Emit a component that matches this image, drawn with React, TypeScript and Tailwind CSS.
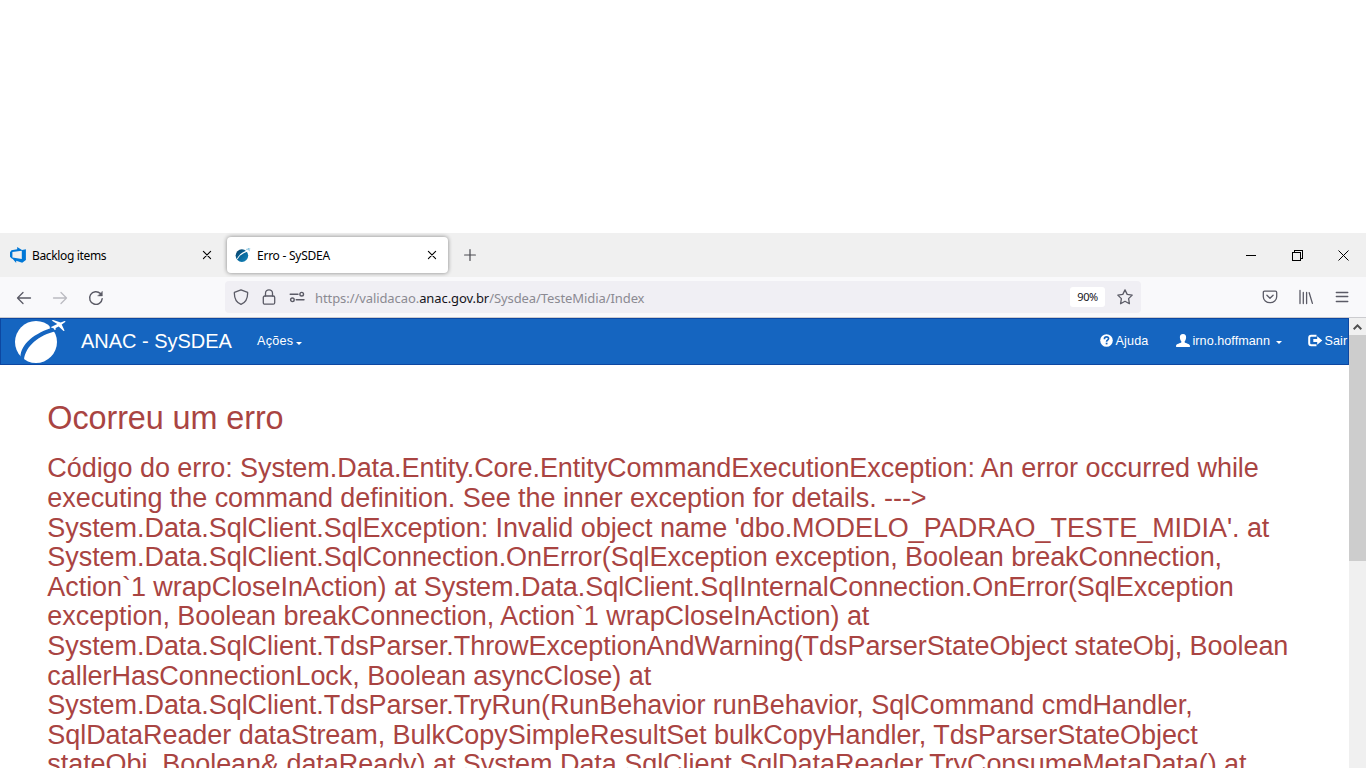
import React from "react";

const errorLines = [
  "Código do erro: System.Data.Entity.Core.EntityCommandExecutionException: An error occurred while",
  "executing the command definition. See the inner exception for details. --->",
  "System.Data.SqlClient.SqlException: Invalid object name 'dbo.MODELO_PADRAO_TESTE_MIDIA'. at",
  "System.Data.SqlClient.SqlConnection.OnError(SqlException exception, Boolean breakConnection,",
  "Action`1 wrapCloseInAction) at System.Data.SqlClient.SqlInternalConnection.OnError(SqlException",
  "exception, Boolean breakConnection, Action`1 wrapCloseInAction) at",
  "System.Data.SqlClient.TdsParser.ThrowExceptionAndWarning(TdsParserStateObject stateObj, Boolean",
  "callerHasConnectionLock, Boolean asyncClose) at",
  "System.Data.SqlClient.TdsParser.TryRun(RunBehavior runBehavior, SqlCommand cmdHandler,",
  "SqlDataReader dataStream, BulkCopySimpleResultSet bulkCopyHandler, TdsParserStateObject",
  "stateObj, Boolean& dataReady) at System.Data.SqlClient.SqlDataReader.TryConsumeMetaData() at",
];

type IconProps = {
  className?: string;
  size?: number;
  width?: number;
  children: React.ReactNode;
};

function Icon({ className = "", size = 16, width = 1.3, children }: IconProps) {
  return (
    <svg
      className={`block shrink-0 ${className}`}
      width={size}
      height={size}
      viewBox={`0 0 ${size} ${size}`}
      fill="none"
      stroke="currentColor"
      strokeWidth={width}
      strokeLinecap="round"
      strokeLinejoin="round"
    >
      {children}
    </svg>
  );
}

function TabClose({ className = "" }: { className?: string }) {
  return (
    <Icon size={10} width={1.1} className={className}>
      <path d="M1.4 1.4l7.2 7.2M8.6 1.4L1.4 8.6" />
    </Icon>
  );
}

function TabStrip() {
  return (
    <div className="flex h-11 shrink-0 items-center bg-[#f0f0f0] font-['Noto_Sans',sans-serif] text-[12px] text-black">
      <div className="flex h-full w-[227px] shrink-0 items-center pl-2.5">
        <svg className="block shrink-0" width="16" height="16" viewBox="0 0 16 16">
          <path
            fill="#0078d7"
            d="M0 5.2L1.5 3.2L7.2 2.2V0L12 3L15.9 2.2V13L12.2 15.8L6.2 13.8V15.9L2.8 12L1.7 11.6L0 9.8ZM2.4 5V10.6L11.8 12V3.8Z"
          />
        </svg>
        <span className="ml-1.5 w-[170px] pt-0.5 tracking-[-0.35px] whitespace-nowrap">Backlog items</span>
        <TabClose />
      </div>
      <div className="flex h-9 w-[221px] shrink-0 items-center rounded-[4px] bg-white pl-2 shadow-[0_0_4px_rgba(0,0,0,0.45)]">
        <svg className="block shrink-0" width="16" height="16" viewBox="0 0 16 16">
          <defs>
            <linearGradient id="fav" x1="0" y1="0" x2="1" y2="1">
              <stop offset="0" stopColor="#07375c" />
              <stop offset="0.5" stopColor="#08689c" />
              <stop offset="1" stopColor="#1686bd" />
            </linearGradient>
          </defs>
          <circle cx="6.9" cy="8.6" r="6.3" fill="url(#fav)" />
          <path d="M2 11.6C3.6 8 7 5.4 12.2 3.6L12.6 4.4C8 6 4.6 8.3 2.6 12.4Z" fill="#fff" />
          <path d="M11.2 2.4L15.2 1.8M13.3 1L14.4 4.2" stroke="#8cc6e0" strokeWidth="1" />
        </svg>
        <span className="ml-1.5 w-[170px] pt-0.5 tracking-[-0.25px] whitespace-nowrap">Erro - SySDEA</span>
        <TabClose />
      </div>
      <Icon size={12} width={1.2} className="ml-[15.5px] text-[#4a4a50]">
        <path d="M6 .6v10.8M.6 6h10.8" />
      </Icon>
      <div className="ml-auto flex items-center pr-[17px]">
        <svg className="block" width="10" height="11" shapeRendering="crispEdges">
          <path d="M0 5h10v1H0z" fill="#000" />
        </svg>
        <svg className="ml-9 block" width="11" height="11" fill="none" stroke="#000" shapeRendering="crispEdges">
          <path d="M.5 2.5h8v8h-8zM2.5 2V.5h8v8H9" />
        </svg>
        <svg className="ml-[35px] block" width="11" height="11" stroke="#000" strokeWidth="1">
          <path d="M.5.5l10 10M10.5.5l-10 10" />
        </svg>
      </div>
    </div>
  );
}

function AddressBar() {
  return (
    <div className="flex h-10 shrink-0 items-center bg-[#f9f9fb] text-[#5b5b66]">
      <Icon className="ml-4 mt-px">
        <path d="M1.5 8h13M7 2.5L1.5 8L7 13.5" />
      </Icon>
      <Icon className="ml-5 mt-px text-[#bbbbc1]">
        <path d="M1.5 8h13M9 2.5L14.5 8L9 13.5" />
      </Icon>
      <Icon className="ml-5 mt-px" width={1.4}>
        <path d="M14.2 8.6A6.3 6.3 0 1 1 12.4 3.6" />
        <path d="M14.4 1.5V6H9.9Z" fill="currentColor" strokeWidth={0.4} />
      </Icon>
      <div className="ml-[121px] flex h-8 w-[916px] shrink-0 items-center rounded-[4px] bg-[#f0eff4] pl-2">
        <Icon>
          <path d="M8 .8L14.6 3.3C14.9 9 12.5 13.5 8 15.4C3.5 13.5 1.1 9 1.4 3.3Z" />
        </Icon>
        <Icon className="ml-3">
          <rect x="2.3" y="7" width="11.4" height="8.2" rx="1.5" />
          <path d="M4.5 7V4.3a3.5 3.5 0 0 1 7 0V7" />
        </Icon>
        <Icon className="ml-3" width={1.4}>
          <path d="M1.2 5.2H9M7.2 10.8H15" />
          <circle cx="12.7" cy="5.2" r="1.8" />
          <circle cx="3.4" cy="10.8" r="1.8" />
        </Icon>
        <div className="ml-2.5 w-[755px] pt-[3px] font-['Noto_Sans',sans-serif] text-[13px] whitespace-nowrap text-[#8b8a92]">
          <span className="tracking-[-0.08px]">
            https://validacao.<span className="text-[#15141a]">anac.gov.br</span>/Sysdea/TesteMidia/Index
          </span>
        </div>
        <div className="flex h-5 w-[35px] shrink-0 items-center justify-center rounded-[3px] bg-white pt-px font-['Noto_Sans',sans-serif] text-[11px] tracking-[-0.4px] text-[#15141a]">
          90%
        </div>
        <Icon className="ml-3">
          <path d="M8 .9L10.2 5.4L15.2 6.1L11.6 9.6L12.4 14.7L8 12.3L3.6 14.7L4.4 9.6L.8 6.1L5.8 5.4Z" />
        </Icon>
      </div>
      <div className="ml-auto flex items-center pr-4">
        <Icon>
          <path d="M2.6 2.2h10.8q1.3 0 1.3 1.3v4.2a6.7 6 0 0 1-13.4 0V3.500q0-1.300 1.300-1.300z" />
          <path d="M4.9 6.2L8 9.2L11.1 6.2" />
        </Icon>
        <Icon className="ml-5">
          <path d="M2 1.500v13M5.300 3.500v11M8.600 3.500v11M11.200 3.700L14.400 14.400" />
        </Icon>
        <Icon className="ml-5" width={1.3}>
          <path d="M2.300 3.500h11.500M2.300 7.500h11.500M2.300 12.500h11.500" />
        </Icon>
      </div>
    </div>
  );
}

function Caret({ className = "" }: { className?: string }) {
  return (
    <svg className={`block shrink-0 ${className}`} width="6" height="3" viewBox="0 0 6 3" fill="currentColor">
      <path d="M0 0h6L3 3z" />
    </svg>
  );
}

function SiteNav() {
  return (
    <nav className="flex h-[47px] w-[1349px] items-center overflow-hidden border border-[#0d47a1] bg-[#1565c0] text-white">
      <svg className="ml-3.5 block shrink-0" width="52" height="45" viewBox="0 0 52 45">
        <circle cx="21" cy="23" r="21" fill="#fff" />
        <path d="M5.5 38C5.500 25 20 13.500 39 8.200L41 12.300C24 16 10.500 27 9 41Z" fill="#1565c0" />
        <g stroke="#1565c0" strokeWidth="3" fill="none">
          <path d="M35 9L51 3" />
        </g>
        <path
          fill="#fff"
          d="M35.5 8.300L42.300 4.900L36.600 1.500L38.200 .900L45.700 3.600L49 2.200Q51.200 1.800 50.200 3.100L46.700 5.600L49.600 11.700L48.500 12L43.700 7.500L40.700 9L40.500 11L39.600 11L38.800 9.500Z"
        />
      </svg>
      <span className="ml-3.5 w-44 shrink-0 pb-px text-[20px] leading-5 tracking-[-0.02px] whitespace-nowrap">ANAC - SySDEA</span>
      <span className="w-[39px] shrink-0 text-[12.6px] tracking-[0.25px] whitespace-nowrap">Ações</span>
      <Caret className="mt-[3px]" />
      <div className="ml-[797.5px] flex shrink-0 items-center text-[12.6px] whitespace-nowrap">
        <svg className="mb-0.5 block shrink-0" width="13" height="13" viewBox="0 0 13 13">
          <circle cx="6.5" cy="6.5" r="6.3" fill="#fff" />
          <path d="M4.5 5.2V4.6Q4.500 2.900 6.500 2.900Q8.600 2.900 8.600 4.600Q8.600 5.600 7.400 6.200Q6.600 6.600 6.600 7.800" fill="none" stroke="#1565c0" strokeWidth="1.7" />
          <path d="M5.7 8.7h1.8v1.7H5.7z" fill="#1565c0" />
        </svg>
        <span className="ml-[3px] w-[60px] tracking-[0.15px]">Ajuda</span>
        <svg className="mb-0.5 block shrink-0" width="14" height="13" viewBox="0 0 14 13" fill="#fff">
          <path d="M7 0C9.300 0 10.200 1.400 10.100 3.400C10 5.300 9.400 6.400 8.700 7.200V8.500C9.500 9.200 13.900 9.900 13.900 11.500V13H.100V11.500C.100 9.900 4.500 9.200 5.300 8.500V7.200C4.600 6.400 4 5.300 3.900 3.400C3.800 1.400 4.700 0 7 0Z" />
        </svg>
        <span className="ml-[3px] w-[83px] tracking-[0.05px]">irno.hoffmann</span>
        <Caret className="mt-[3px]" />
        <svg className="mb-0.5 ml-[26px] block shrink-0" width="15" height="13" viewBox="0 0 15 13">
          <path d="M8.5 1.7H3.200Q1.200 1.700 1.200 3.700V9.300Q1.200 11.300 3.200 11.300H8.500" fill="none" stroke="#fff" strokeWidth="2" />
          <path d="M5.3 5H9.200V2.200L14.300 6.500L9.200 10.800V8H5.300Z" fill="#fff" />
        </svg>
        <span className="ml-0.5 tracking-[0.1px]">Sair</span>
      </div>
    </nav>
  );
}

export default function App() {
  return (
    <div className="flex h-screen w-[1366px] flex-col overflow-hidden bg-white pt-[233px] font-['Liberation_Sans',Arial,sans-serif]">
      <TabStrip />
      <AddressBar />
      <div className="h-px shrink-0 bg-[#cccccf]" />
      <div className="flex min-h-0 flex-1">
        <main className="w-[1349px] shrink-0 overflow-hidden">
          <SiteNav />
          <section className="pt-[35px] pl-[47.3px] text-[#a94442]">
            <h1 className="text-[32.4px] leading-[36px] tracking-[-0.09px]">Ocorreu um erro</h1>
            <h2 className="mt-[18.4px] text-[27px] leading-[29.6px] tracking-[-0.053px]">
              {errorLines.map((line) => (
                <span key={line} className="block whitespace-nowrap">
                  {line}
                </span>
              ))}
            </h2>
          </section>
        </main>
        <aside className="w-[17px] shrink-0 bg-[#f0f0f0]">
          <div className="flex h-[17px] items-center justify-center">
            <svg width="9" height="6" viewBox="0 0 9 6" fill="none" stroke="#505050" strokeWidth="2">
              <path d="M.7 5.200L4.500 1.400L8.300 5.200" />
            </svg>
          </div>
          <div className="h-[226px] bg-[#cdcdcd]" />
        </aside>
      </div>
    </div>
  );
}
